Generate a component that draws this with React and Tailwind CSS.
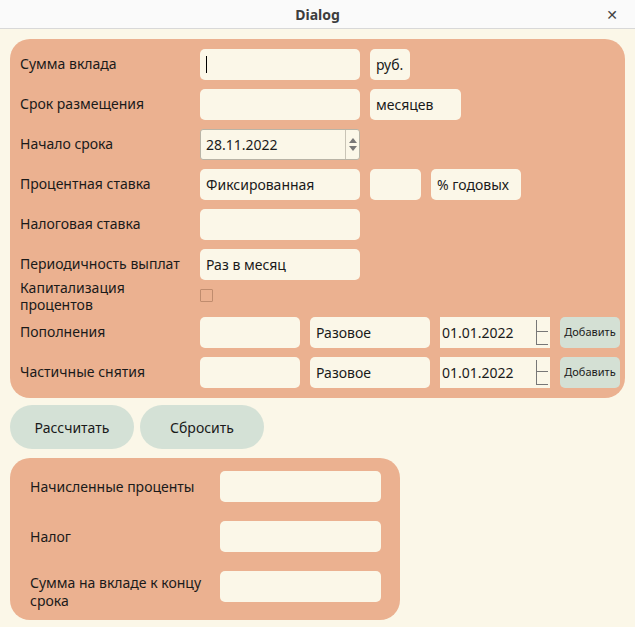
import React from 'react';

const font = { fontFamily: '"Noto Sans", "DejaVu Sans", sans-serif' };

const Field = ({ w = 'w-[160px]', value = '', children }) => (
  <div className={`${w} shrink-0 h-[31px] bg-[#fbf7e8] rounded-[5px] flex items-center px-[6px] text-[14px] text-[#1a1a1a]`}>
    {value}
    {children}
  </div>
);

const DateSpin = ({ value }) => (
  <div className="w-[110px] shrink-0 h-[31px] bg-[#fbf7e8] flex items-center pl-[2px] text-[14px] text-[#1a1a1a]">
    <span className="flex-1">{value}</span>
    <div className="flex flex-col w-[12px] h-[25px] mr-[2px] border-l border-[#777]">
      <div className="flex-1 border-b border-[#777]" />
      <div className="flex-1 border-b border-[#777]" />
    </div>
  </div>
);

const Row = ({ label, children, cls = 'h-[40px]', lw = 'w-[180px]', lcls = 'leading-[16px]' }) => (
  <div className={`flex items-center ${cls}`}>
    <div className={`${lw} ${lcls} shrink-0 text-[14px] text-[#1a1a1a]`}>{label}</div>
    <div className="flex items-center gap-[10px]">{children}</div>
  </div>
);

const AddBtn = () => (
  <div className="w-[60px] shrink-0 h-[31px] bg-[#d4e0d4] rounded-[5px] flex items-center justify-center text-[11px] text-[#1a1a1a]">
    Добавить
  </div>
);

export default function App() {
  return (
    <div className="w-[635px] h-[627px] bg-[#fbf7e8] flex flex-col" style={font}>
      <div className="h-[29px] bg-[#fafafa] border-b border-[#d8d8d8] flex items-center justify-center relative shrink-0">
        <span className="font-bold text-[14px] text-[#3d3d3d]">Dialog</span>
        <span className="absolute right-[17px] top-[4px] text-[14px] text-[#444]">✕</span>
      </div>
      <div className="px-[10px] pt-[10px]">
        <div className="bg-[#ebb190] rounded-[20px] pl-[10px] pr-[10px] pt-[5px] h-[359px]">
          <Row label="Сумма вклада">
            <Field>
              <span className="w-[1px] h-[17px] bg-black" />
            </Field>
            <Field w="w-[40px]" value="руб." />
          </Row>
          <Row label="Срок размещения">
            <Field />
            <Field w="w-[91px]" value="месяцев" />
          </Row>
          <Row label="Начало срока">
            <div className="w-[160px] h-[31px] bg-[#fbf7e8] border border-[#b9b4a6] rounded-[3px] flex items-center pl-[5px] text-[14px] text-[#1a1a1a]">
              <span className="flex-1">28.11.2022</span>
              <div className="w-[14px] h-full border-l border-[#c9c4b6] flex flex-col items-center justify-center gap-[3px] text-[#666]">
                <svg width="8" height="5" viewBox="0 0 8 5"><path d="M0 5 L4 0 L8 5 Z" fill="#777" /></svg>
                <svg width="8" height="5" viewBox="0 0 8 5"><path d="M0 0 L4 5 L8 0 Z" fill="#777" /></svg>
              </div>
            </div>
          </Row>
          <Row label="Процентная ставка">
            <Field value="Фиксированная" />
            <Field w="w-[51px]" />
            <Field w="w-[90px]" value="% годовых" />
          </Row>
          <Row label="Налоговая ставка">
            <Field />
          </Row>
          <Row label="Периодичность выплат">
            <Field value="Раз в месяц" />
          </Row>
          <Row label={<>Капитализация<br />процентов</>} cls="h-[28px]" lcls="-mt-[5px] leading-[17px]">
            <div className="w-[13px] h-[13px] -mt-[5px] border border-[#c08c6e] rounded-[1px]" />
          </Row>
          <Row label="Пополнения">
            <Field w="w-[100px]" />
            <Field w="w-[120px]" value="Разовое" />
            <DateSpin value="01.01.2022" />
            <AddBtn />
          </Row>
          <Row label="Частичные снятия">
            <Field w="w-[100px]" />
            <Field w="w-[120px]" value="Разовое" />
            <DateSpin value="01.01.2022" />
            <AddBtn />
          </Row>
        </div>
        <div className="flex gap-[6px] mt-[7px]">
          <div className="w-[124px] h-[44px] bg-[#d4e1d6] rounded-[22px] flex items-center justify-center text-[14px] text-[#1a1a1a]">Рассчитать</div>
          <div className="w-[124px] h-[44px] bg-[#d4e1d6] rounded-[22px] flex items-center justify-center text-[14px] text-[#1a1a1a]">Сбросить</div>
        </div>
        <div className="mt-[9px] w-[390px] h-[162px] bg-[#ebb190] rounded-[20px] pl-[20px] pt-[13px] flex flex-col gap-[19px]">
          <Row label="Начисленные проценты" cls="h-[31px]" lw="w-[190px]">
            <Field w="w-[161px]" />
          </Row>
          <Row label="Налог" cls="h-[31px]" lw="w-[190px]">
            <Field w="w-[161px]" />
          </Row>
          <Row label={<>Сумма на вкладе к концу<br />срока</>} cls="h-[31px]" lw="w-[190px]" lcls="mt-[10px] leading-[18px]">
            <Field w="w-[161px]" />
          </Row>
        </div>
      </div>
    </div>
  );
}
